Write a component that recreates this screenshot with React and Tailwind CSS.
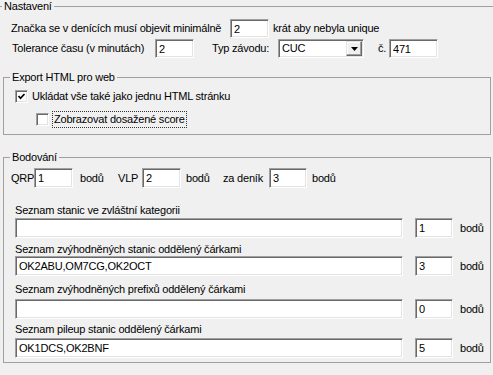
import React from 'react';

const sunken =
  'bg-white border border-t-[#a0a0a0] border-l-[#a0a0a0] border-b-white border-r-white shadow-[inset_1px_1px_0_#696969,inset_-1px_-1px_0_#e3e3e3]';

function Field({ w, h = 'h-[20px]', children }) {
  return (
    <div className={`${w} ${h} ${sunken} shrink-0 flex items-center pl-[3px] pt-[1px] leading-[13px] whitespace-nowrap overflow-hidden`}>
      {children}
    </div>
  );
}

function Check({ checked }) {
  return (
    <div className={`w-[13px] h-[13px] ${sunken} shrink-0 flex items-center justify-center`}>
      {checked && (
        <svg width="9" height="9" viewBox="0 0 9 9">
          <polyline points="1.5,4 3.5,6.3 7.5,2" fill="none" stroke="#000" strokeWidth="1.7" />
        </svg>
      )}
    </div>
  );
}

function Select({ value }) {
  return (
    <div className={`w-[86px] h-[19px] ${sunken} shrink-0 flex items-center justify-between pl-[3px] pr-[1px]`}>
      <span className="leading-[13px]">{value}</span>
      <div className="w-[16px] h-[15px] bg-[#f0f0f0] border border-t-[#e3e3e3] border-l-[#e3e3e3] border-b-[#696969] border-r-[#696969] shadow-[inset_-1px_-1px_0_#a0a0a0,inset_1px_1px_0_#fff] flex items-center justify-center">
        <svg width="7" height="4" viewBox="0 0 7 4">
          <polygon points="0,0 7,0 3.5,4" fill="#000" />
        </svg>
      </div>
    </div>
  );
}

const lists = [
  { label: 'Seznam stanic ve zvláštní kategorii', value: '', pts: '1', lm: 'mt-[16px]', im: 'mt-[1px]' },
  { label: 'Seznam zvýhodněných stanic oddělený čárkami', value: 'OK2ABU,OM7CG,OK2OCT', pts: '3', lm: 'mt-[5px]', im: 'mt-0' },
  { label: 'Seznam zvýhodněných prefixů oddělený čárkami', value: '', pts: '0', lm: 'mt-[7px]', im: 'mt-[3px]' },
  { label: 'Seznam pileup stanic oddělený čárkami', value: 'OK1DCS,OK2BNF', pts: '5', lm: 'mt-[4px]', im: 'mt-[2px]' },
];

export default function App() {
  return (
    <div className="w-[493px] h-[375px] bg-[#f0f0f0] overflow-hidden text-[11px] tracking-[-0.2px] text-black font-['Liberation_Sans',Arial,sans-serif]">
      <fieldset className="ml-[-6px] w-[510px] border border-[#a0a0a0] p-0 pb-[20px]">
        <legend className="ml-[7px] px-[2px] leading-[12px]">Nastavení</legend>

        <div className="mt-[7px] pl-[16px] h-[19px] flex items-center">
          <span className="w-[219px] shrink-0">Značka se v denících musí objevit minimálně</span>
          <Field w="w-[39px]" h="h-[19px]">2</Field>
          <span className="ml-[4px]">krát aby nebyla unique</span>
        </div>

        <div className="mt-[1px] pl-[17px] h-[19px] flex items-center">
          <span className="w-[143px] shrink-0">Tolerance času (v minutách)</span>
          <Field w="w-[39px]" h="h-[19px]">2</Field>
          <span className="ml-[18px] w-[66px] shrink-0">Typ závodu:</span>
          <Select value="CUC" />
          <span className="ml-[14px] w-[11px] shrink-0">č.</span>
          <Field w="w-[49px]" h="h-[19px]">471</Field>
        </div>

        <fieldset className="ml-[8px] mt-[13px] w-[488px] border border-[#a0a0a0] p-0 pb-[6px]">
          <legend className="ml-[6px] px-[2px] leading-[12px]">Export HTML pro web</legend>
          <div className="mt-[5px] pl-[11px] h-[17px] flex items-center">
            <Check checked />
            <span className="ml-[4px]">Ukládat vše také jako jednu HTML stránku</span>
          </div>
          <div className="mt-[6px] pl-[32px] h-[17px] flex items-center">
            <Check />
            <span className="ml-[3px] px-[1px] py-[1px] border border-dotted border-[#333] leading-[13px]">Zobrazovat dosažené score</span>
          </div>
        </fieldset>

        <fieldset className="ml-[8px] mt-[16px] w-[488px] border border-[#a0a0a0] p-0 pb-[4px]">
          <legend className="ml-[6px] px-[2px] leading-[12px]">Bodování</legend>
          <div className="mt-[5px] pl-[7px] h-[20px] flex items-center">
            <span className="w-[23px] shrink-0">QRP</span>
            <Field w="w-[39px]">1</Field>
            <span className="ml-[7px] w-[38px] shrink-0">bodů</span>
            <span className="w-[24px] shrink-0">VLP</span>
            <Field w="w-[39px]">2</Field>
            <span className="ml-[5px] w-[37px] shrink-0">bodů</span>
            <span className="w-[46px] shrink-0">za deník</span>
            <Field w="w-[38px]">3</Field>
            <span className="ml-[5px]">bodů</span>
          </div>

          {lists.map((l) => (
            <div key={l.label} className="pl-[11px]">
              <div className={`${l.lm} h-[13px] leading-[13px]`}>{l.label}</div>
              <div className={`${l.im} flex items-center`}>
                <Field w="w-[388px]">{l.value}</Field>
                <div className="ml-[12px]">
                  <Field w="w-[38px]">{l.pts}</Field>
                </div>
                <span className="ml-[7px]">bodů</span>
              </div>
            </div>
          ))}
        </fieldset>
      </fieldset>
    </div>
  );
}
